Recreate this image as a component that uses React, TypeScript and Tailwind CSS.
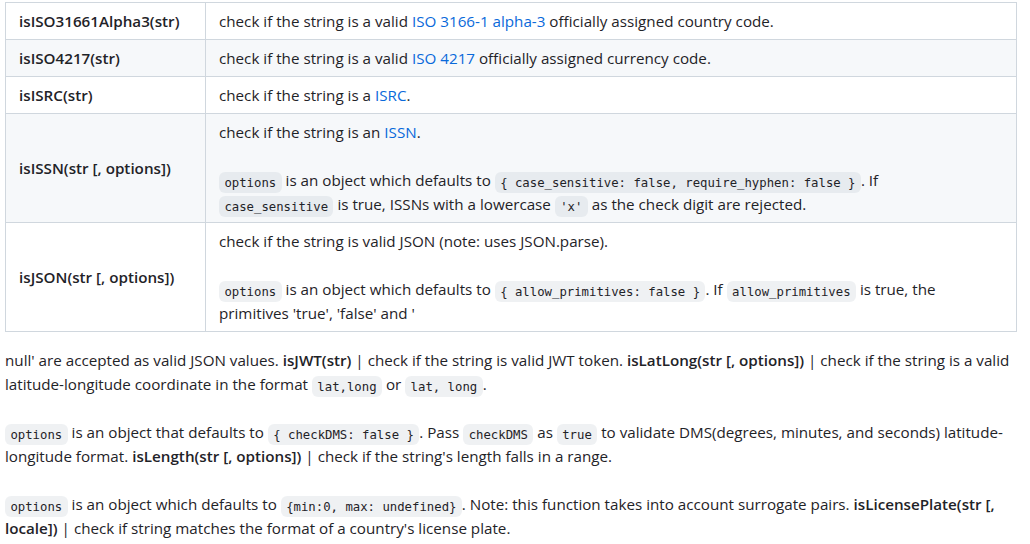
import type { ReactNode } from "react";

const Code = ({ children }: { children: ReactNode }) => (
  <code className="font-['DejaVu_Sans_Mono',monospace] text-[12.3px] leading-none bg-[#afb8c133] rounded-[6px] px-[5.4px] py-[3.5px] whitespace-pre">
    {children}
  </code>
);

const Link = ({ children }: { children: ReactNode }) => (
  <a href="#" className="text-[#0969da]">
    {children}
  </a>
);

type Row = { name: string; desc: ReactNode };

const rows: Row[] = [
  {
    name: "isISO31661Alpha3(str)",
    desc: (
      <>
        check if the string is a valid <Link>ISO 3166-1 alpha-3</Link> officially assigned country code.
      </>
    ),
  },
  {
    name: "isISO4217(str)",
    desc: (
      <>
        check if the string is a valid <Link>ISO 4217</Link> officially assigned currency code.
      </>
    ),
  },
  {
    name: "isISRC(str)",
    desc: (
      <>
        check if the string is a <Link>ISRC</Link>.
      </>
    ),
  },
  {
    name: "isISSN(str [, options])",
    desc: (
      <>
        check if the string is an <Link>ISSN</Link>.
        <br />
        <br />
        <Code>options</Code> is an object which defaults to{" "}
        <Code>{"{ case_sensitive: false, require_hyphen: false }"}</Code>. If
        <br />
        <Code>case_sensitive</Code> is true, ISSNs with a lowercase <Code>'x'</Code> as the check digit are rejected.
      </>
    ),
  },
  {
    name: "isJSON(str [, options])",
    desc: (
      <>
        check if the string is valid JSON (note: uses JSON.parse).
        <br />
        <br />
        <Code>options</Code> is an object which defaults to <Code>{"{ allow_primitives: false }"}</Code>. If{" "}
        <Code>allow_primitives</Code> is true, the
        <br />
        primitives 'true', 'false' and '
      </>
    ),
  },
];

export default function App() {
  return (
    <div className="w-[1017px] pl-[5px] pt-[2px] bg-white text-[#1f2328] font-['Open_Sans',sans-serif] text-[15.2px] leading-6">
      <table className="w-full border-collapse">
        <tbody>
          {rows.map((r, i) => (
            <tr key={r.name} className={i % 2 === 1 ? "bg-[#f6f8fa]" : "bg-white"}>
              <td className="w-[200px] border border-[#d0d7de] px-[13px] py-[6px] font-semibold align-middle">
                {r.name}
              </td>
              <td className="border border-[#d0d7de] px-[13px] py-[6px] align-middle">{r.desc}</td>
            </tr>
          ))}
        </tbody>
      </table>

      <p className="mt-4">
        null' are accepted as valid JSON values. <strong className="font-semibold">isJWT(str)</strong> | check if the
        string is valid JWT token. <strong className="font-semibold">isLatLong(str [, options])</strong> | check if the
        string is a valid
        <br />
        latitude-longitude coordinate in the format <Code>lat,long</Code> or <Code>lat, long</Code>.
        <br />
        <br />
        <Code>options</Code> is an object that defaults to <Code>{"{ checkDMS: false }"}</Code>. Pass{" "}
        <Code>checkDMS</Code> as <Code>true</Code> to validate DMS(degrees, minutes, and seconds) latitude-
        <br />
        longitude format. <strong className="font-semibold">isLength(str [, options])</strong> | check if the string's
        length falls in a range.
        <br />
        <br />
        <Code>options</Code> is an object which defaults to <Code>{"{min:0, max: undefined}"}</Code>. Note: this
        function takes into account surrogate pairs. <strong className="font-semibold">isLicensePlate(str [,</strong>
        <br />
        <strong className="font-semibold">locale])</strong> | check if string matches the format of a country's
        license plate.
      </p>
    </div>
  );
}
